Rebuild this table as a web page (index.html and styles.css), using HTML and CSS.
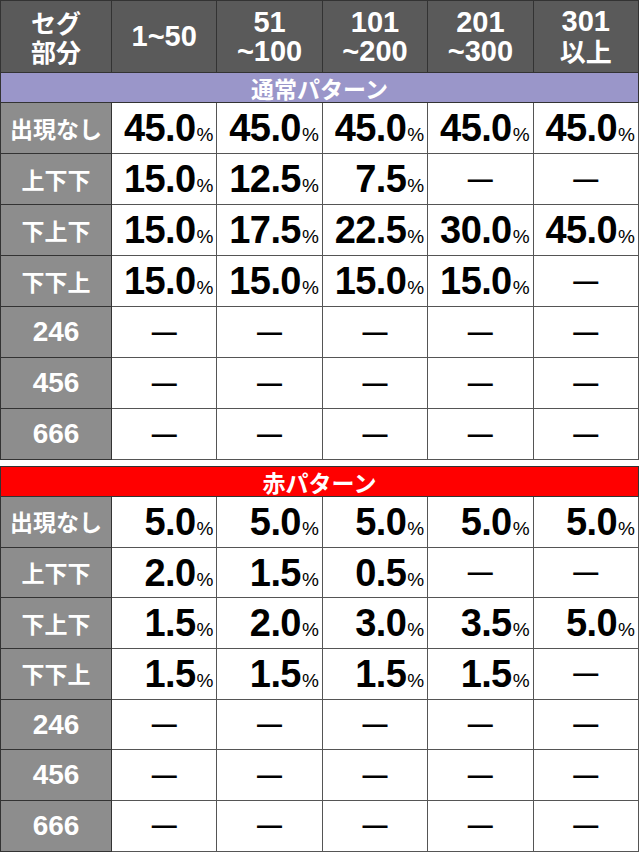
FILE: index.html
```html
<!DOCTYPE html>
<html lang="ja">
<head>
<meta charset="utf-8">
<title>セグ部分 振り分け</title>
<link rel="stylesheet" href="styles.css">
</head>
<body>
<table class="grid">
  <colgroup><col class="c-label"><col span="5"></colgroup>
  <tr class="head">
    <th class="jp">セグ<br>部分</th>
    <th>1~50</th>
    <th>51<br>~100</th>
    <th>101<br>~200</th>
    <th>201<br>~300</th>
    <th>301<br><span class="jp">以上</span></th>
  </tr>
  <tr class="band band-blue"><td colspan="6">通常パターン</td></tr>
  <tr>
    <th class="lbl jp">出現なし</th>
    <td class="val"><span class="num">45.0</span><span class="pct">%</span></td>
    <td class="val"><span class="num">45.0</span><span class="pct">%</span></td>
    <td class="val"><span class="num">45.0</span><span class="pct">%</span></td>
    <td class="val"><span class="num">45.0</span><span class="pct">%</span></td>
    <td class="val"><span class="num">45.0</span><span class="pct">%</span></td>
  </tr>
  <tr>
    <th class="lbl jp">上下下</th>
    <td class="val"><span class="num">15.0</span><span class="pct">%</span></td>
    <td class="val"><span class="num">12.5</span><span class="pct">%</span></td>
    <td class="val"><span class="num">7.5</span><span class="pct">%</span></td>
    <td class="none">—</td>
    <td class="none">—</td>
  </tr>
  <tr>
    <th class="lbl jp">下上下</th>
    <td class="val"><span class="num">15.0</span><span class="pct">%</span></td>
    <td class="val"><span class="num">17.5</span><span class="pct">%</span></td>
    <td class="val"><span class="num">22.5</span><span class="pct">%</span></td>
    <td class="val"><span class="num">30.0</span><span class="pct">%</span></td>
    <td class="val"><span class="num">45.0</span><span class="pct">%</span></td>
  </tr>
  <tr>
    <th class="lbl jp">下下上</th>
    <td class="val"><span class="num">15.0</span><span class="pct">%</span></td>
    <td class="val"><span class="num">15.0</span><span class="pct">%</span></td>
    <td class="val"><span class="num">15.0</span><span class="pct">%</span></td>
    <td class="val"><span class="num">15.0</span><span class="pct">%</span></td>
    <td class="none">—</td>
  </tr>
  <tr>
    <th class="lbl">246</th>
    <td class="none">—</td><td class="none">—</td><td class="none">—</td><td class="none">—</td><td class="none">—</td>
  </tr>
  <tr>
    <th class="lbl">456</th>
    <td class="none">—</td><td class="none">—</td><td class="none">—</td><td class="none">—</td><td class="none">—</td>
  </tr>
  <tr>
    <th class="lbl">666</th>
    <td class="none">—</td><td class="none">—</td><td class="none">—</td><td class="none">—</td><td class="none">—</td>
  </tr>
</table>

<table class="grid grid-second">
  <colgroup><col class="c-label"><col span="5"></colgroup>
  <tr class="band band-red"><td colspan="6">赤パターン</td></tr>
  <tr>
    <th class="lbl jp">出現なし</th>
    <td class="val"><span class="num">5.0</span><span class="pct">%</span></td>
    <td class="val"><span class="num">5.0</span><span class="pct">%</span></td>
    <td class="val"><span class="num">5.0</span><span class="pct">%</span></td>
    <td class="val"><span class="num">5.0</span><span class="pct">%</span></td>
    <td class="val"><span class="num">5.0</span><span class="pct">%</span></td>
  </tr>
  <tr>
    <th class="lbl jp">上下下</th>
    <td class="val"><span class="num">2.0</span><span class="pct">%</span></td>
    <td class="val"><span class="num">1.5</span><span class="pct">%</span></td>
    <td class="val"><span class="num">0.5</span><span class="pct">%</span></td>
    <td class="none">—</td>
    <td class="none">—</td>
  </tr>
  <tr>
    <th class="lbl jp">下上下</th>
    <td class="val"><span class="num">1.5</span><span class="pct">%</span></td>
    <td class="val"><span class="num">2.0</span><span class="pct">%</span></td>
    <td class="val"><span class="num">3.0</span><span class="pct">%</span></td>
    <td class="val"><span class="num">3.5</span><span class="pct">%</span></td>
    <td class="val"><span class="num">5.0</span><span class="pct">%</span></td>
  </tr>
  <tr>
    <th class="lbl jp">下下上</th>
    <td class="val"><span class="num">1.5</span><span class="pct">%</span></td>
    <td class="val"><span class="num">1.5</span><span class="pct">%</span></td>
    <td class="val"><span class="num">1.5</span><span class="pct">%</span></td>
    <td class="val"><span class="num">1.5</span><span class="pct">%</span></td>
    <td class="none">—</td>
  </tr>
  <tr>
    <th class="lbl">246</th>
    <td class="none">—</td><td class="none">—</td><td class="none">—</td><td class="none">—</td><td class="none">—</td>
  </tr>
  <tr>
    <th class="lbl">456</th>
    <td class="none">—</td><td class="none">—</td><td class="none">—</td><td class="none">—</td><td class="none">—</td>
  </tr>
  <tr>
    <th class="lbl">666</th>
    <td class="none">—</td><td class="none">—</td><td class="none">—</td><td class="none">—</td><td class="none">—</td>
  </tr>
</table>
</body>
</html>
```

FILE: styles.css
```css
html, body {
  margin: 0;
  padding: 0;
  background: #ffffff;
}

body {
  font-family: "Liberation Sans", Arial, "Noto Sans CJK JP", sans-serif;
  color: #000;
}

.jp {
  font-family: "Noto Sans CJK JP", "Liberation Sans", sans-serif;
}

.grid {
  width: 639px;
  border-collapse: collapse;
  table-layout: fixed;
  border: 1px solid #3a3a3a;
}

.grid-second {
  margin-top: 6px;
}

.c-label {
  width: 111px;
}

.grid th,
.grid td {
  padding: 0;
  border: 1px solid #555;
  vertical-align: middle;
  text-align: center;
}

/* header row */
.grid .head th {
  height: 71px;
  background: #5a5a5a;
  color: #fff;
  font-weight: bold;
  font-size: 29px;
  line-height: 29px;
  border-color: #333;
}

.grid .head th.jp {
  font-size: 25px;
  line-height: 29px;
}

.grid .head th .jp {
  font-size: 26px;
}

/* section bands */
.grid .band td {
  height: 29px;
  color: #fff;
  font-family: "Noto Sans CJK JP", "Liberation Sans", sans-serif;
  font-weight: bold;
  font-size: 23px;
  line-height: 28px;
  border-color: #333;
}

.grid .band-blue td {
  background: #9a96c9;
}

.grid .band-red td {
  background: #ff0000;
}

/* row labels */
.grid .lbl {
  height: 50px;
  background: #8d8d8d;
  color: #fff;
  font-weight: bold;
  font-size: 28px;
  line-height: 1;
  border-color: #333;
}

.grid-second .lbl {
  height: 49.7px;
}

.grid .lbl.jp {
  font-size: 23px;
}

/* values */
.grid td.val {
  text-align: right;
  padding-right: 3px;
  white-space: nowrap;
  line-height: 1;
}

.num {
  font-weight: bold;
  font-size: 38px;
  letter-spacing: -0.6px;
}

.pct {
  font-size: 19px;
  font-weight: normal;
  margin-left: 1px;
}

.grid td.none {
  font-weight: bold;
  font-size: 25px;
  line-height: 1;
}
```
